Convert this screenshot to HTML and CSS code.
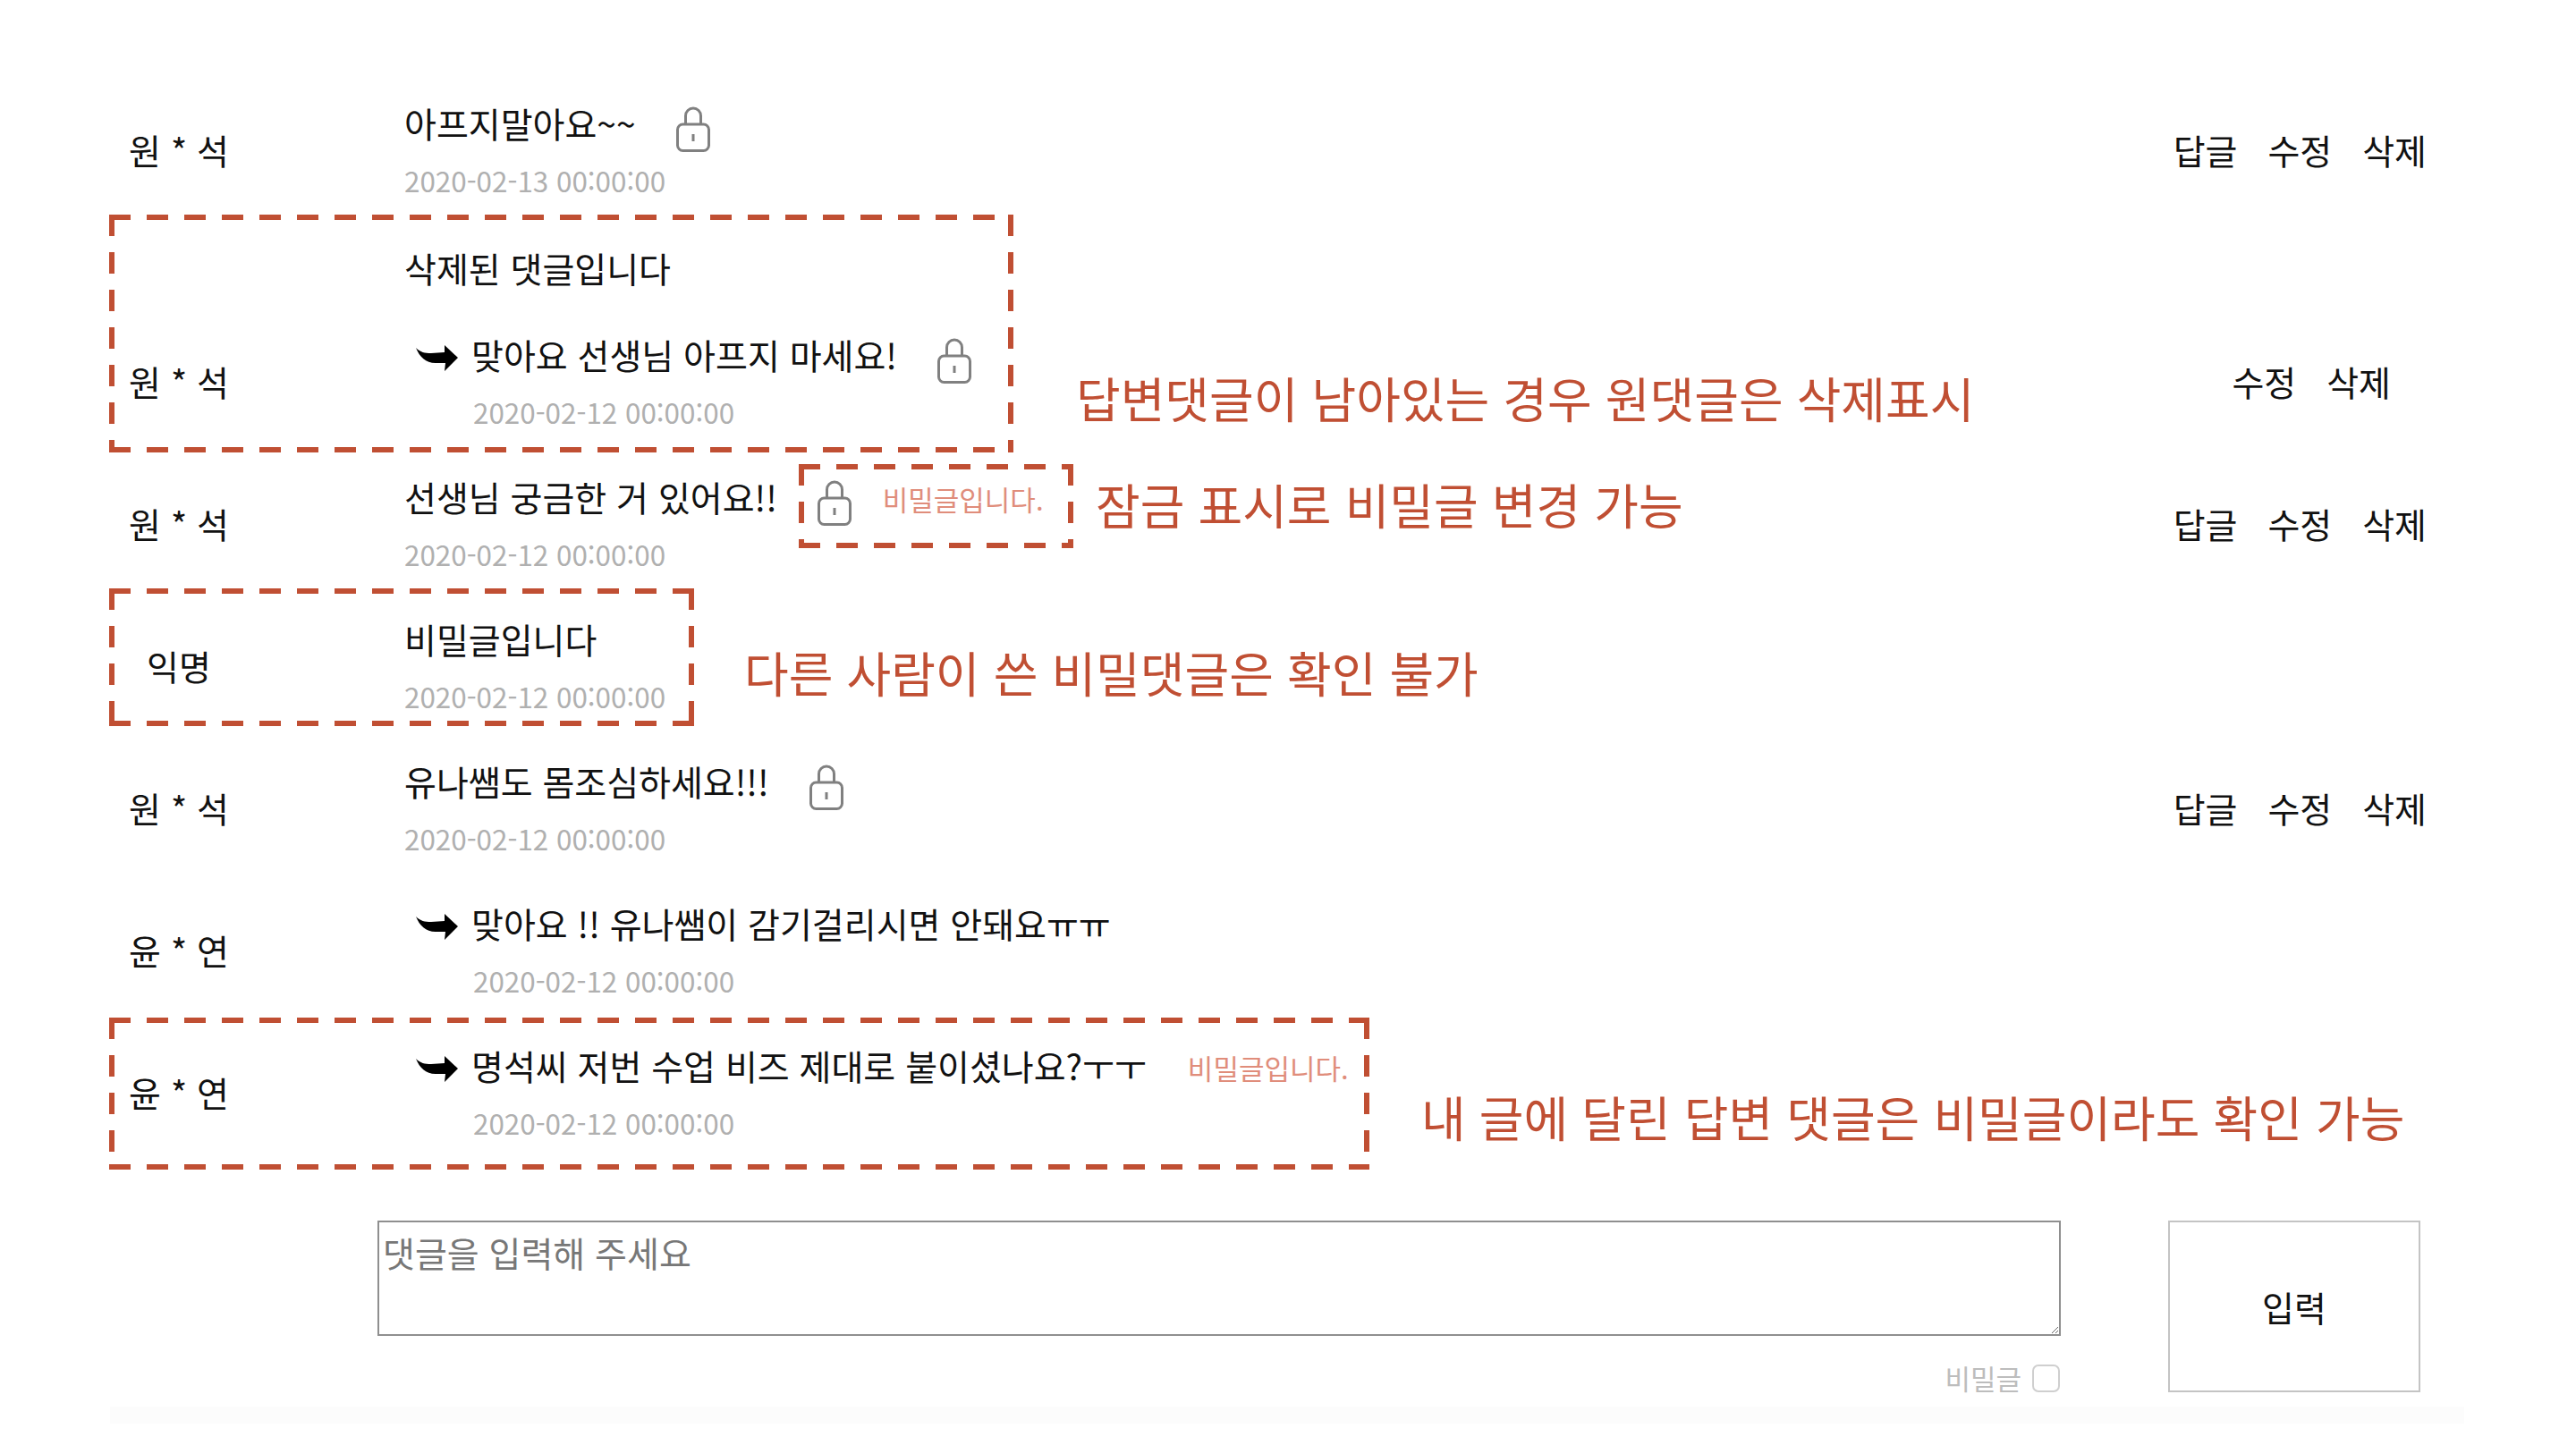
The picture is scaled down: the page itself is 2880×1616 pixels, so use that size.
FILE: index.html
```html
<!DOCTYPE html>
<html lang="ko">
<head>
    <meta charset="UTF-8">
    <title>댓글</title>
    <link rel="stylesheet" href="styles.css">
</head>
<body>
    <svg class="defs" width="0" height="0">
        <symbol id="lock" viewBox="0 0 38 51">
            <rect x="1.5" y="20" width="35" height="29.5" rx="6" fill="none" stroke="#808080" stroke-width="3"/>
            <path d="M10.5 20V10.5a8.5 8.5 0 0 1 17 0V20M19 31v8" fill="none" stroke="#808080" stroke-width="3"/>
        </symbol>
        <symbol id="arrow" viewBox="0 0 47 29">
            <path d="M0 3C5 8 10 9 17 9L32 8 32 0 47 14 32 29 33 20 22 20C11 20 4 13 0 3Z" fill="#000"/>
        </symbol>
    </svg>

    <div class="page">
        <div class="comment">
            <div class="name">원 * 석</div>
            <div class="body">
                <div class="msg"><span>아프지말아요~~</span><svg class="lock"><use href="#lock"/></svg></div>
                <div class="date">2020-02-13 00:00:00</div>
            </div>
            <div class="actions"><span>답글</span><span>수정</span><span>삭제</span></div>
        </div>

        <div class="deleted"><div class="msg">삭제된 댓글입니다</div></div>
        <div class="comment">
            <div class="name">원 * 석</div>
            <div class="body">
                <div class="msg reply"><svg class="arrow"><use href="#arrow"/></svg><span>맞아요 선생님 아프지 마세요!</span><svg class="lock"><use href="#lock"/></svg></div>
                <div class="date indent">2020-02-12 00:00:00</div>
            </div>
            <div class="actions two"><span>수정</span><span>삭제</span></div>
        </div>

        <div class="comment">
            <div class="name">원 * 석</div>
            <div class="body">
                <div class="msg"><span>선생님 궁금한 거 있어요!!</span><svg class="lock"><use href="#lock"/></svg><span class="secret">비밀글입니다.</span></div>
                <div class="date">2020-02-12 00:00:00</div>
            </div>
            <div class="actions"><span>답글</span><span>수정</span><span>삭제</span></div>
        </div>

        <div class="comment">
            <div class="name">익명</div>
            <div class="body">
                <div class="msg">비밀글입니다</div>
                <div class="date">2020-02-12 00:00:00</div>
            </div>
        </div>

        <div class="comment">
            <div class="name">원 * 석</div>
            <div class="body">
                <div class="msg"><span>유나쌤도 몸조심하세요!!!</span><svg class="lock"><use href="#lock"/></svg></div>
                <div class="date">2020-02-12 00:00:00</div>
            </div>
            <div class="actions"><span>답글</span><span>수정</span><span>삭제</span></div>
        </div>

        <div class="comment">
            <div class="name">윤 * 연</div>
            <div class="body">
                <div class="msg reply"><svg class="arrow"><use href="#arrow"/></svg><span>맞아요 !! 유나쌤이 감기걸리시면 안돼요ㅠㅠ</span></div>
                <div class="date indent">2020-02-12 00:00:00</div>
            </div>
        </div>

        <div class="comment">
            <div class="name">윤 * 연</div>
            <div class="body">
                <div class="msg reply"><svg class="arrow"><use href="#arrow"/></svg><span>명석씨 저번 수업 비즈 제대로 붙이셨나요?ㅜㅜ</span><span class="secret wide">비밀글입니다.</span></div>
                <div class="date indent">2020-02-12 00:00:00</div>
            </div>
        </div>

        <div class="write">
            <div class="write-main">
                <textarea placeholder="댓글을 입력해 주세요"></textarea>
                <label class="secret-check">비밀글 <input type="checkbox"></label>
            </div>
            <button>입력</button>
        </div>
        <div class="band"></div>

        <!-- 설명 표시 -->
        <div class="mark m1"></div>
        <div class="mark m2"></div>
        <div class="mark m3"></div>
        <div class="mark m4"></div>
        <div class="note n1">답변댓글이 남아있는 경우 원댓글은 삭제표시</div>
        <div class="note n2">잠금 표시로 비밀글 변경 가능</div>
        <div class="note n3">다른 사람이 쓴 비밀댓글은 확인 불가</div>
        <div class="note n4">내 글에 달린 답변 댓글은 비밀글이라도 확인 가능</div>
    </div>
</body>
</html>
```

FILE: styles.css
```css
* {
    box-sizing: border-box;
}

body {
    margin: 0;
    background: #fff;
    font-family: "Noto Sans CJK KR", "Noto Sans", sans-serif;
    color: #111;
}

.defs {
    display: block;
}

.page {
    position: relative;
    width: 2880px;
    height: 1616px;
    padding-top: 90px;
    overflow: hidden;
}

.comment {
    display: flex;
    align-items: center;
    height: 159px;
    padding-left: 123px;
    font-size: 39px;
}

.name {
    width: 154px;
    margin: -6px 175px 0 0;
    text-align: center;
    line-height: 50px;
}

.body {
    flex: 1;
}

.msg {
    display: flex;
    align-items: center;
    height: 50px;
    line-height: 50px;
    white-space: nowrap;
}

.deleted {
    height: 100px;
    padding: 25px 0 0 452px;
    font-size: 39px;
}

.date {
    margin-top: 15px;
    line-height: 50px;
    font-size: 31.4px;
    color: #b0b0b0;
}

.date.indent {
    margin-left: 77px;
}

.lock {
    width: 38px;
    height: 51px;
    margin: 14px 0 0 45px;
    flex: none;
}

.arrow {
    width: 47px;
    height: 29px;
    margin: 8px 15px 0 13px;
    flex: none;
}

.secret {
    margin: 5px 0 0 35px;
    font-size: 31px;
    color: #e08d7b;
}

.secret.wide {
    margin-left: 46px;
}

.actions {
    display: flex;
    gap: 34px;
    margin-top: -6px;
    padding-right: 167px;
}

.actions.two {
    padding-right: 207px;
}

.write {
    display: flex;
    align-items: flex-start;
    margin-top: 62px;
    padding-left: 422px;
}

.write-main {
    width: 1882px;
    margin-right: 120px;
}

textarea {
    display: block;
    width: 100%;
    height: 129px;
    padding: 8px 4px 4px;
    border: 2px solid #8f8f8f;
    font-family: inherit;
    font-size: 39px;
    line-height: 50px;
}

textarea::placeholder {
    color: #777;
}

.secret-check {
    display: flex;
    justify-content: flex-end;
    align-items: center;
    gap: 12px;
    margin-top: 24px;
    font-size: 31px;
    color: #bdbdbd;
}

.secret-check input {
    appearance: none;
    width: 31px;
    height: 31px;
    margin: 2px 1px 0 0;
    border: 2px solid #cfcfcf;
    border-radius: 7px;
    background: #fff;
}

button {
    width: 282px;
    height: 192px;
    background: #fff;
    border: 2px solid #c4c4c4;
    font-family: inherit;
    font-size: 39px;
    color: #111;
}

.band {
    position: absolute;
    left: 123px;
    top: 1573px;
    width: 2632px;
    height: 19px;
    background: #fcfcfc;
}

.mark {
    position: absolute;
    background-image:
        repeating-linear-gradient(90deg, #c04f33 0 24px, transparent 24px 42px),
        repeating-linear-gradient(90deg, #c04f33 0 24px, transparent 24px 42px),
        repeating-linear-gradient(180deg, #c04f33 0 24px, transparent 24px 42px),
        repeating-linear-gradient(180deg, #c04f33 0 24px, transparent 24px 42px);
    background-size: 100% 6px, 100% 6px, 6px 100%, 6px 100%;
    background-position: left top, left bottom, left top, right top;
    background-repeat: no-repeat;
}

.m1 { left: 122px; top: 240px; width: 1011px; height: 266px; }
.m2 { left: 893px; top: 519px; width: 307px; height: 94px; }
.m3 { left: 122px; top: 658px; width: 654px; height: 154px; }
.m4 { left: 122px; top: 1138px; width: 1409px; height: 170px; }

.note {
    position: absolute;
    font-size: 54px;
    line-height: 70px;
    color: #c04f33;
    white-space: nowrap;
}

.n1 { left: 1203px; top: 410px; }
.n2 { left: 1225px; top: 529px; }
.n3 { left: 832px; top: 717px; }
.n4 { left: 1589px; top: 1214px; }
```
